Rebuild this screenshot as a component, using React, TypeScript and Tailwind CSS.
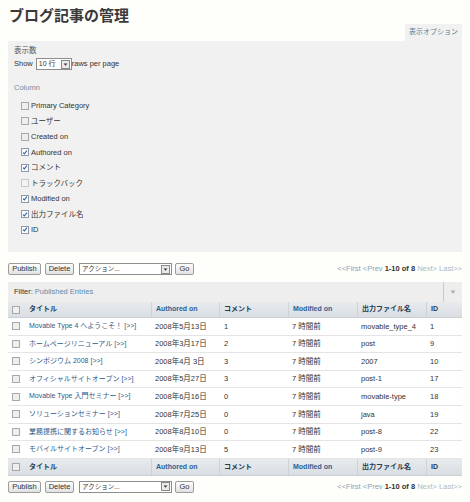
import React from "react";

const FONT = "font-['Liberation_Sans','Noto_Sans_CJK_JP',sans-serif]";

function Box({ checked, dim }: { checked?: boolean; dim?: boolean }) {
  return (
    <span
      className={`w-[8px] h-[8px] border flex items-center justify-center shrink-0 ${
        dim ? "border-[#c8c8c8] bg-[#f3f3f3]" : checked ? "border-[#8f9aa6] bg-[#fbfbfb]" : "border-[#a8a8a8] bg-[#eeeeee]"
      }`}
    >
      {checked && (
        <svg viewBox="0 0 8 8" className="w-[7px] h-[7px]">
          <path d="M1.4 4.1 L3.1 5.9 L6.6 1.6" stroke="#2d5fae" strokeWidth="1.4" fill="none" />
        </svg>
      )}
    </span>
  );
}

function Arrow() {
  return (
    <span className="w-[9px] h-[9px] border border-[#8a8a8a] bg-[#e9e9e9] flex items-center justify-center">
      <svg viewBox="0 0 8 8" className="w-[5px] h-[5px]">
        <path d="M1 2.5 L7 2.5 L4 6 Z" fill="#333" />
      </svg>
    </span>
  );
}

function Btn({ label, w }: { label: string; w: string }) {
  return (
    <span
      className={`${w} h-[12px] border border-[#9c9c9c] rounded-[2px] bg-gradient-to-b from-[#fdfdfd] to-[#e2e2e2] flex items-center justify-center text-[7.5px] text-[#333]`}
    >
      {label}
    </span>
  );
}

function ActionRow() {
  return (
    <div className="flex items-center justify-between h-[12px]">
      <div className="flex items-center">
        <Btn label="Publish" w="w-[33px]" />
        <span className="ml-[4px]"><Btn label="Delete" w="w-[29px]" /></span>
        <span className="ml-[5px] w-[93px] h-[12px] border border-[#8d8d8d] bg-white flex items-center justify-between pl-[2px] pr-[1px] text-[6.5px] text-[#333]">
          <span>アクション...</span>
          <Arrow />
        </span>
        <span className="ml-[3px]"><Btn label="Go" w="w-[19px]" /></span>
      </div>
      <div className="text-[7.5px] text-[#8aa2b6]">
        &lt;&lt;First &lt;Prev <span className="font-bold text-[#333]">1-10 of 8</span>{" "}
        <span className="text-[#b0b8c0]">Next&gt; Last&gt;&gt;</span>
      </div>
    </div>
  );
}

const cols = "grid grid-cols-[19px_124px_68px_69px_69px_69px_36px]";

function HeaderRow({ h }: { h: string }) {
  const cell = "border-l border-[#cdd3d9] pl-[4px] flex items-center font-bold";
  return (
    <div className={`${cols} ${h} bg-gradient-to-b from-[#e8ebee] to-[#d9dee3] text-[7px] border-b border-[#c9cfd5]`}>
      <div className="flex items-center pl-[4px]"><Box /></div>
      <div className="pl-[2px] flex items-center font-bold text-[#273b52]">タイトル</div>
      <div className={`${cell} text-[#2f5f90]`}>Authored on</div>
      <div className={`${cell} text-[#273b52]`}>コメント</div>
      <div className={`${cell} text-[#2f5f90]`}>Modified on</div>
      <div className={`${cell} text-[#273b52]`}>出力ファイル名</div>
      <div className={`${cell} text-[#273b52]`}>ID</div>
    </div>
  );
}

const rows = [
  ["Movable Type 4 へようこそ！", "2008年5月13日", "1", "movable_type_4", "1"],
  ["ホームページリニューアル", "2008年3月17日", "2", "post", "9"],
  ["シンポジウム 2008", "2008年4月 3日", "3", "2007", "10"],
  ["オフィシャルサイトオープン", "2008年5月27日", "3", "post-1", "17"],
  ["Movable Type 入門セミナー", "2008年6月16日", "0", "movable-type", "18"],
  ["ソリューションセミナー", "2008年7月25日", "0", "java", "19"],
  ["業務提携に関するお知らせ", "2008年8月10日", "0", "post-8", "22"],
  ["モバイルサイトオープン", "2008年9月13日", "5", "post-9", "23"],
];

const options: [string, boolean, boolean?][] = [
  ["Primary Category", false],
  ["ユーザー", false],
  ["Created on", false],
  ["Authored on", true],
  ["コメント", true],
  ["トラックバック", false, true],
  ["Modified on", true],
  ["出力ファイル名", true],
  ["ID", true],
];

export default function App() {
  return (
    <div className={`${FONT} w-[470px] h-[502px] bg-[#fefefb] text-[#333] overflow-hidden`}>
      <div className="ml-[8px] w-[454px]">
        <div className="pt-[7px] h-[24px] pl-[1px] text-[15px] leading-[17px] font-bold text-[#3a3a3a]">ブログ記事の管理</div>
        <div className="flex justify-end">
          <div className="w-[57px] h-[17px] bg-[#f1f1f1] flex items-center justify-center text-[7px] text-[#5d7f97]">表示オプション</div>
        </div>
        <div className="h-[211px] bg-[#f1f1f1] pt-[5px] pl-[6px] text-[7.5px]">
          <div className="h-[10px] leading-[10px] text-[#555]">表示数</div>
          <div className="mt-[2px] h-[12px] flex items-center">
            <span className="text-[#333]">Show</span>
            <span className="ml-[3px] w-[36px] h-[12px] border border-[#8d8d8d] bg-white flex items-center justify-between pl-[2px] pr-[1px]">
              <span className="text-[7px]">10 行</span>
              <Arrow />
            </span>
            <span className="text-[#333]">raws per page</span>
          </div>
          <div className="mt-[13px] h-[10px] leading-[10px] text-[#7d8a94]">Column</div>
          <div className="mt-[5px] ml-[7px]">
            {options.map(([label, c, dim]) => (
              <div key={label} className="h-[15.5px] flex items-center gap-[2px] text-[#333]">
                <Box checked={c} dim={dim} />
                <span>{label}</span>
              </div>
            ))}
          </div>
        </div>
        <div className="mt-[11px]"><ActionRow /></div>
        <div className="mt-[7px] h-[20px] bg-[#eeeeee] flex items-center justify-between text-[7.5px]">
          <span className="pl-[6px]">
            <span className="text-[#333]">Filter:</span> <span className="text-[#5f8cab]">Published Entries</span>
          </span>
          <span className="w-[19px] h-[20px] border-l border-[#c9c9c9] flex items-center justify-center">
            <svg viewBox="0 0 8 8" className="w-[6px] h-[6px]"><path d="M1 2 L7 2 L4 6.5 Z" fill="#a5acb3" /></svg>
          </span>
        </div>
        <HeaderRow h="h-[16px]" />
        {rows.map((r, i) => (
          <div key={i} className={`${cols} h-[17.6px] bg-white border-b border-[#e4e4e4] text-[7.5px] items-center`}>
            <div className="pl-[4px] flex items-center"><Box /></div>
            <div className="pl-[2px] text-[7px] text-[#2f5a86] whitespace-nowrap">{r[0]} [&gt;&gt;]</div>
            <div className="pl-[4px]">{r[1]}</div>
            <div className="pl-[5px]">{r[2]}</div>
            <div className="pl-[4px]">7 時間前</div>
            <div className="pl-[4px]">{r[3]}</div>
            <div className="pl-[4px]">{r[4]}</div>
          </div>
        ))}
        <HeaderRow h="h-[17px]" />
        <div className="mt-[5px]"><ActionRow /></div>
      </div>
    </div>
  );
}
